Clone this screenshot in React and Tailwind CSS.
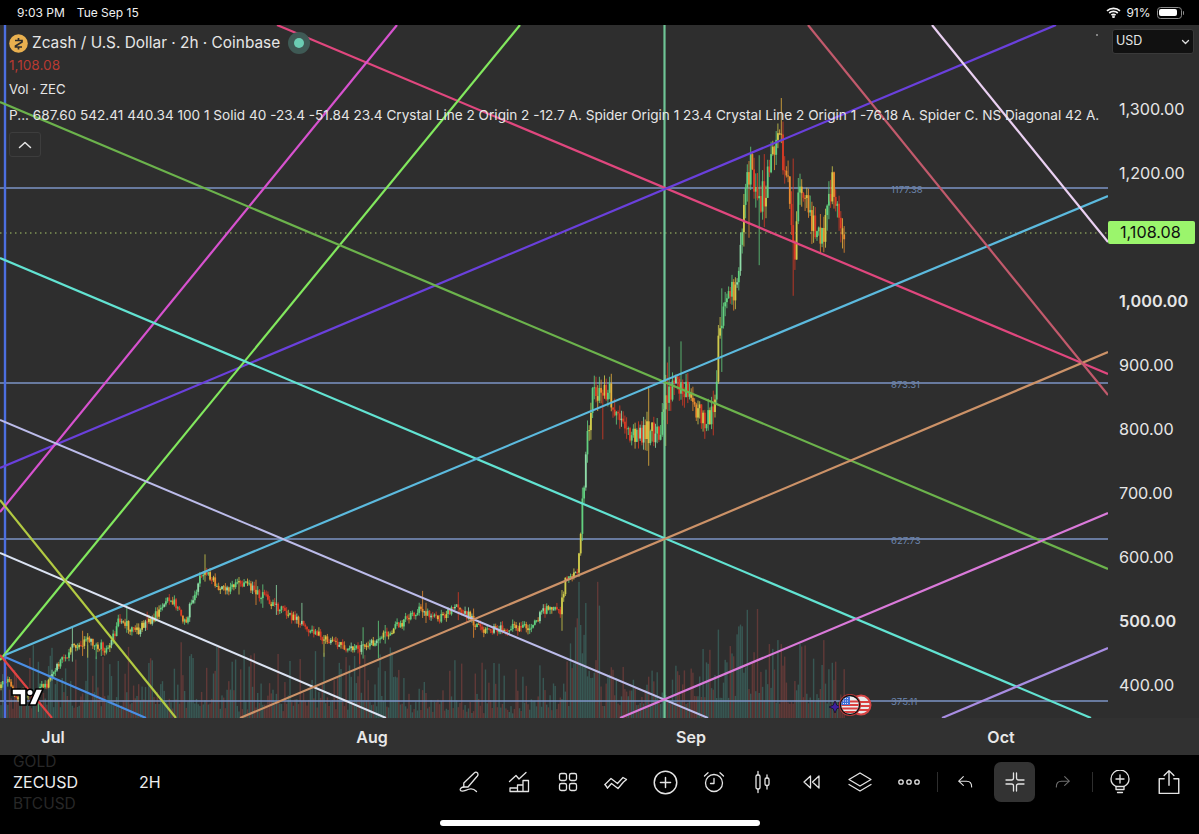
import React from "react";

const FONT = "font-['Inter','Liberation_Sans',sans-serif]";

function makeRng(seed) {
  let s = seed;
  return () => {
    s = (s * 1664525 + 1013904223) % 4294967296;
    return s / 4294967296;
  };
}

const anchors = [[0,688],[8,676],[16,698],[30,692],[48,684],[60,662],[72,648],[90,640],[108,650],[120,618],[135,632],[150,622],[170,596],[185,622],[203,570],[222,590],[245,582],[262,596],[285,612],[310,630],[335,645],[365,648],[395,628],[420,610],[440,618],[458,606],[485,632],[510,628],[530,626],[548,608],[560,612],[566,578],[577,572],[582,515],[586,440],[592,400],[604,385],[615,405],[628,440],[645,432],[660,432],[668,395],[678,385],[692,400],[707,425],[715,405],[718,345],[726,300],[738,285],[744,205],[750,165],[757,200],[765,195],[778,130],[785,170],[790,205],[795,255],[800,175],[808,200],[818,245],[824,230],[832,180],[838,210],[845,238]];

function priceAt(x) {
  for (let i = 1; i < anchors.length; i++) {
    if (x <= anchors[i][0]) {
      const [x0, y0] = anchors[i - 1];
      const [x1, y1] = anchors[i];
      return y0 + ((y1 - y0) * (x - x0)) / (x1 - x0);
    }
  }
  return 238;
}

const rng = makeRng(77);
const candles = [];
const vols = [];
let prev = 688;
for (let x = 1; x <= 845; x += 1.7) {
  const amp = x > 740 ? 32 : x > 582 ? 24 : 9;
  const p = priceAt(x);
  const c = p + (rng() - 0.5) * amp;
  const o = prev;
  prev = c;
  const wick = rng() < 0.06 ? 2.2 : 0.5;
  const hi = Math.min(o, c) - rng() * amp * wick;
  const lo = Math.max(o, c) + rng() * amp * wick;
  const up = c < o;
  const r = rng();
  const color = up
    ? r < 0.6 ? "#62d07f" : r < 0.85 ? "#cfcb4c" : "#8fdca8"
    : r < 0.6 ? "#dc3a24" : r < 0.85 ? "#ea8a2e" : "#e8b23e";
  candles.push({ x, o, c, hi, lo, color });
  const q = rng();
  let env = 6 + Math.pow(q, 3) * 62 + rng() * 12;
  if (x > 570 && x < 600) env = 40 + Math.pow(q, 2) * 135;
  else if (x >= 600 && x < 660) env = 12 + Math.pow(q, 2) * 50;
  else if (x >= 660 && x < 700) env = 14 + Math.pow(q, 2) * 40;
  else if (x >= 700 && x < 760) env = 20 + Math.pow(q, 2) * 90;
  else if (x >= 760) env = 14 + Math.pow(q, 2) * 70;
  if (x > 400 && x < 560) env *= 0.75;
  vols.push({ x, h: env, color: up ? "#3f7a72" : "#8a4340" });
}

const lines = [
  ["#4c6fe0", 5, 25, 5, 718, 2.4],
  ["#e0477e", 277, 25, 1108, 374, 2.2],
  ["#6a40dc", 0, 468, 1056, 25, 2.2],
  ["#d752cf", 397, 25, 0, 512, 2.2],
  ["#82e85e", 520, 25, 0, 660, 2.2],
  ["#6cb34c", 0, 102, 1108, 569, 2.2],
  ["#62e3d2", 0, 258, 1091, 718, 2.2],
  ["#5cbade", 5, 655, 1108, 196, 2.2],
  ["#bcbcea", 0, 420, 708, 718, 2],
  ["#dbe3f2", 0, 553, 386, 718, 2],
  ["#4a8ee4", 5, 657, 146, 718, 2.2],
  ["#e24343", 0, 655, 52, 718, 2.2],
  ["#b2ca42", 0, 500, 176, 718, 2.2],
  ["#cc9268", 240, 718, 1108, 352, 2.2],
  ["#da7ada", 620, 718, 1108, 513, 2.2],
  ["#a88de2", 942, 718, 1108, 648, 2.2],
  ["#c25a6c", 808, 25, 1108, 395, 2.2],
  ["#ead0f2", 932, 25, 1108, 242, 2.2],
];

function Chart() {
  return (
    <svg viewBox="0 25 1108 693" className="block h-full w-full" preserveAspectRatio="none">
      {vols.map((v, i) => (
        <rect key={i} x={v.x - 0.7} y={718 - v.h} width="1.4" height={v.h} fill={v.color} opacity="0.55" />
      ))}
      {[188, 383, 539, 701].map((y) => (
        <line key={y} x1="0" x2="1108" y1={y} y2={y} stroke="#7c94c6" strokeWidth="1.4" />
      ))}
      <line x1="0" x2="1108" y1="233" y2="233" stroke="#a8c76a" strokeWidth="1" strokeDasharray="1.5 3.5" />
      {candles.map((c, i) => (
        <g key={i}>
          <line x1={c.x} x2={c.x} y1={c.hi} y2={c.lo} stroke={c.color} strokeWidth="0.8" />
          <rect x={c.x - 0.9} y={Math.min(c.o, c.c)} width="1.8" height={Math.max(Math.abs(c.o - c.c), 1)} fill={c.color} />
        </g>
      ))}
      <line x1="664.5" x2="664.5" y1="25" y2="718" stroke="#6fc495" strokeWidth="2.2" />
      {lines.map(([color, x1, y1, x2, y2, w], i) => (
        <line key={i} x1={x1} y1={y1} x2={x2} y2={y2} stroke={color} strokeWidth={w} />
      ))}
    </svg>
  );
}

function TvLogo() {
  return (
    <svg width="34" height="20" viewBox="0 0 34 20" className="absolute bottom-[11px] left-[10px]">
      <path d="M2 2h14v16h-6V8H2z" fill="#fff" stroke="#000" strokeWidth="1.6" />
      <circle cx="20" cy="5.5" r="3.2" fill="#fff" stroke="#000" strokeWidth="1.4" />
      <path d="M26 2h7l-7 16h-7z" fill="#fff" stroke="#000" strokeWidth="1.6" />
    </svg>
  );
}

function Badges() {
  return (
    <svg width="46" height="26" viewBox="0 0 46 26" className="absolute bottom-0 left-[829px]">
      <path d="M6 9l1.800 4.200L12 15l-4.200 1.800L6 21l-1.800-4.200L0 15l4.200-1.800z" fill="#3e1f9c" stroke="#14102a" strokeWidth="0.8" />
      <circle cx="32" cy="13" r="9.500" fill="#e9e9ea" stroke="#d64545" strokeWidth="2" />
      <path d="M23 10h18M23 14h18M24 18h16" stroke="#d94040" strokeWidth="2" />
      <circle cx="21" cy="13" r="11" fill="#c23a3a" />
      <circle cx="21" cy="13" r="9.500" fill="#eeeeee" stroke="#111" strokeWidth="1.400" />
      <clipPath id="flg"><circle cx="21" cy="13" r="8.800" /></clipPath>
      <g clipPath="url(#flg)">
        <path d="M12 9.500h18M12 13h18M12 16.500h18M12 20h18" stroke="#d94040" strokeWidth="1.800" />
        <rect x="12" y="4" width="9" height="9" fill="#3f6fd8" />
        <path d="M14 6.500h6M14 9h6M14 11.500h6" stroke="#dfe7fb" strokeWidth="1" strokeDasharray="1 1" />
      </g>
    </svg>
  );
}

const sw = { fill: "none", stroke: "#e4e4e4", strokeWidth: 1.3, strokeLinecap: "round", strokeLinejoin: "round" };
const Ic = ({ children, size = 24 }) => (
  <svg width={size} height={size} viewBox="0 0 24 24" {...sw}>{children}</svg>
);

const icons = {
  pen: <Ic><path d="M16.500 2.800c1.300-1.300 3.500-.3 3.500 1.600 0 .6-.2 1.100-.6 1.600L10 17H5.800v-4z" /><path d="M5.800 17c-2.200.2-3.800 1.500-3.600 2.900.3 1.600 3 1.400 5.500.4 3.200-1.300 7-2.800 10.800 1.200" /></Ic>,
  chart: <Ic><path d="M2.500 11.500 9 5.500l3 3.500 7-6.500" /><path d="M3 21.500h18.500v-11H16v11M16 15h-5.500v6.500M10.500 18H3v3.500" /></Ic>,
  grid: <Ic><rect x="3.500" y="3.500" width="7" height="7" rx="1.800" /><rect x="13.500" y="3.500" width="7" height="7" rx="1.800" /><rect x="3.500" y="13.500" width="7" height="7" rx="1.800" /><rect x="13.500" y="13.500" width="7" height="7" rx="1.800" /></Ic>,
  trend: <Ic><path d="M1 14.500 7 8.500l6.500 5 5.500-6 3.500 2" /><path d="M3.500 18 7.500 13.500 14 18.500 19.500 12l3-2.500" /><path d="M1 14.500 3.500 18" /></Ic>,
  plus: <Ic size={27}><circle cx="12" cy="12" r="10" /><path d="M12 7.500v9M7.500 12h9" /></Ic>,
  alarm: <Ic><circle cx="12" cy="13" r="8.500" /><path d="M12 8.500V13.500H8.500" /><path d="M2.500 6 6 2.800M21.500 6 18 2.800" /></Ic>,
  candle: <Ic><path d="M8 1.500V5M8 19v3.500M17 5v3M17 15.500V19" /><rect x="6" y="5" width="4" height="14" rx="1.400" /><rect x="15" y="8" width="4" height="7.500" rx="1.400" /></Ic>,
  rewind: <Ic><path d="M11.500 6 5 12l6.500 6zM20 6l-6.500 6 6.500 6z" /></Ic>,
  layers: <Ic size={24}><path d="M12 3 23 9.500 12 16 1 9.500z" /><path d="M1 14.500 12 21l11-6.500" /></Ic>,
  dots: <Ic><circle cx="4" cy="12" r="2.200" /><circle cx="12" cy="12" r="2.200" /><circle cx="20" cy="12" r="2.200" /></Ic>,
  undo: <Ic size={20}><path d="M20 18c0-5-2.500-7-6-7H5" /><path d="M10 5.500 4.500 11l5.500 5" /></Ic>,
  shrink: <Ic><path d="M10.500 3v5c0 1.200-.6 2-2 2H3M13.500 3v5c0 1.200.6 2 2 2H21M10.500 21v-5c0-1.200-.6-2-2-2H3M13.500 21v-5c0-1.200.6-2 2-2H21" /></Ic>,
  redo: <svg width="20" height="20" viewBox="0 0 24 24" {...sw} stroke="#6f6f6f"><path d="M4 18c0-5 2.500-7 6-7h9" /><path d="M14 5.500 19.500 11 14 16" /></svg>,
  bulb: <Ic size={24}><path d="M8 16.500c-3-1.500-5-4.200-5-7.500a9 9 0 0 1 18 0c0 3.300-2 6-5 7.500z" /><path d="M12 5v8M8 9h8" /><path d="M8 16.500v3h8v-3M9.500 22.500h5" /></Ic>,
  share: <Ic size={26}><path d="M7.500 9H3v13.500h18V9h-4.500" /><path d="M12 15V1.500M7.500 6 12 1.500 16.500 6" /></Ic>,
};

function Slot({ children }) {
  return <div className="flex w-[48.7px] items-center justify-center">{children}</div>;
}
const Sep = () => <div className="h-[20px] w-px bg-[#2e2e2e]" />;

function Toolbar() {
  return (
    <div className="flex h-[79px] shrink-0 bg-black">
      <div className="relative w-[446px] shrink-0">
        <div className="absolute left-[13px] top-[1px] text-[15.500px] leading-[12px] text-[#282828]">GOLD</div>
        <div className="absolute left-[13px] top-[18px] text-[16px] leading-[18px] text-[#ededed]">ZECUSD</div>
        <div className="absolute left-[139px] top-[18px] text-[16px] leading-[18px] text-[#ededed]">2H</div>
        <div className="absolute left-[13px] top-[40px] text-[15.500px] leading-[18px] text-[#282828]">BTCUSD</div>
      </div>
      <div className="box-content flex h-[40px] items-center self-start pt-[7px]">
        <Slot>{icons.pen}</Slot>
        <Slot>{icons.chart}</Slot>
        <Slot>{icons.grid}</Slot>
        <Slot>{icons.trend}</Slot>
        <Slot>{icons.plus}</Slot>
        <Slot>{icons.alarm}</Slot>
        <Slot>{icons.candle}</Slot>
        <Slot>{icons.rewind}</Slot>
        <Slot>{icons.layers}</Slot>
        <Slot>{icons.dots}</Slot>
        <div className="mx-[4.500px]"><Sep /></div>
        <div className="flex w-[45px] justify-center">{icons.undo}</div>
        <div className="ml-[6.500px] mr-[4px] flex h-[40px] w-[41px] items-center justify-center rounded-[7px] bg-[#333333]">{icons.shrink}</div>
        <div className="flex w-[48px] justify-center">{icons.redo}</div>
        <div className="ml-[4.500px] mr-[3px]"><Sep /></div>
        <Slot>{icons.bulb}</Slot>
        <Slot>{icons.share}</Slot>
      </div>
    </div>
  );
}

function Legend() {
  return (
    <div className="absolute left-[9px] top-[6px] text-[#e6e6e6]">
      <div className="flex h-[24px] items-center">
        <svg width="19" height="19" viewBox="0 0 19 19" className="mr-[4px]">
          <circle cx="9.500" cy="9.500" r="9.300" fill="#e9b04f" />
          <path d="M6 6.500h7v1.500L6.500 12v1H13M9.500 4v2.500M9.500 13v2.500" fill="none" stroke="#2e2e2e" strokeWidth="1.700" />
        </svg>
        <span className="whitespace-nowrap text-[15.400px] leading-[24px]">Zcash / U.S. Dollar · 2h · Coinbase</span>
        <span className="ml-[8px] flex h-[22px] w-[22px] items-center justify-center rounded-full bg-[#3f5a55]">
          <span className="h-[10px] w-[10px] rounded-full bg-[#6bcdb3]" />
        </span>
      </div>
      <div className="text-[13.600px] leading-[20px] text-[#b83a32]">1,108.08</div>
      <div className="mt-[4px] text-[13.200px] leading-[20px]">Vol · ZEC</div>
      <div className="mt-[6px] w-[1092px] whitespace-nowrap text-[13.600px] leading-[20px]">
        P... 687.60 542.41 440.34 100 1 Solid 40 -23.4 -51.84 23.4 Crystal Line 2 Origin 2 -12.7 A. Spider Origin 1 23.4 Crystal Line 2 Origin 1 -76.18 A. Spider C. NS Diagonal 42 A.
      </div>
      <div className="mt-[7px] flex h-[25px] w-[32px] items-center justify-center rounded-[3px] border border-[#3d3d3d]">
        <svg width="16" height="10" viewBox="0 0 16 10" fill="none" stroke="#e6e6e6" strokeWidth="1.500" strokeLinecap="round" strokeLinejoin="round"><path d="M2.500 7.500 8 2.500l5.500 5" /></svg>
      </div>
    </div>
  );
}

const prices = ["1,300.00", "1,200.00", "", "1,000.00", "900.00", "800.00", "700.00", "600.00", "500.00", "400.00"];

function PriceAxis() {
  return (
    <div className="relative w-[91px] shrink-0 text-[#e6e6e6]">
      <div className="ml-[4px] mt-[4px] flex h-[25px] w-[82px] items-center justify-between rounded-[3px] border border-[#3a3a3a] bg-[#111111] pl-[3px] pr-[3px]">
        <span className="text-[12.500px]">USD</span>
        <svg width="9" height="6" viewBox="0 0 9 6" fill="none" stroke="#dddddd" strokeWidth="1.300" strokeLinecap="round" strokeLinejoin="round"><path d="M1.500 1.500 4.500 4.500l3-3" /></svg>
      </div>
      <div className="mt-[23px]">
        {prices.map((p, i) => (
          <div key={i} className={`flex h-16 items-center pl-[11px] text-[16.200px] ${p === "1,000.00" || p === "500.00" ? "font-semibold" : "font-normal"}`}>{p}</div>
        ))}
      </div>
      <div className="absolute left-0 top-[196px] flex h-[23px] w-[87px] items-center rounded-[2px] bg-[#9bf56c] pl-[12px] text-[16.200px] text-[#101010]">1,108.08</div>
    </div>
  );
}

function ChartArea() {
  return (
    <div className="flex h-[693px] shrink-0 bg-[#2e2e2e]">
      <div className="relative h-full w-[1108px] shrink-0 overflow-hidden">
        <Chart />
        <span className="absolute left-[891px] top-[159px] text-[9.500px] leading-[12px] text-[#6d86ae]">1177.38</span>
        <span className="absolute left-[891px] top-[354px] text-[9.500px] leading-[12px] text-[#6d86ae]">873.31</span>
        <span className="absolute left-[891px] top-[510px] text-[9.500px] leading-[12px] text-[#6d86ae]">627.73</span>
        <span className="absolute left-[891px] top-[671px] text-[9.500px] leading-[12px] text-[#6d86ae]">375.11</span>
        <span className="absolute right-[10px] top-[9px] h-[2px] w-[2px] rounded-full bg-[#a0a0a0]" />
        <Legend />
        <TvLogo />
        <Badges />
      </div>
      <PriceAxis />
    </div>
  );
}

function StatusBar() {
  return (
    <div className="flex h-[25px] shrink-0 items-center justify-between bg-black pl-[17px] pr-[15px] text-[12px] text-[#f0f0f0]">
      <div className="flex gap-[12px]">
        <span>9:03 PM</span>
        <span>Tue Sep 15</span>
      </div>
      <div className="flex items-center gap-[5px]">
        <svg width="15" height="11" viewBox="0 0 15 11" fill="none" stroke="#f4f4f4" strokeWidth="1.700">
          <path d="M1 3.800c3.600-3.300 9.400-3.300 13 0M3.200 6c2.400-2.100 6.200-2.100 8.600 0M5.400 8.200c1.200-1 3-1 4.200 0" />
          <circle cx="7.500" cy="9.800" r="0.500" fill="#f4f4f4" />
        </svg>
        <span>91%</span>
        <div className="ml-[1px] flex items-center">
          <div className="flex h-[12px] w-[25px] items-center rounded-[3.500px] border border-[#8a8a8a] p-[1.500px]">
            <div className="h-full w-[88%] rounded-[2px] bg-white" />
          </div>
          <div className="ml-[1px] h-[4px] w-[1.500px] rounded-r-full bg-[#8a8a8a]" />
        </div>
      </div>
    </div>
  );
}

function TimeAxis() {
  return (
    <div className="flex h-[37px] shrink-0 items-center gap-[259px] bg-[#313131] pl-[23px] text-[16px] font-semibold text-[#e8e8e8]">
      <span className="w-[60px] text-center">Jul</span>
      <span className="w-[60px] text-center">Aug</span>
      <span className="w-[60px] text-center">Sep</span>
      <span className="ml-[-9px] w-[60px] text-center">Oct</span>
    </div>
  );
}

export default function App() {
  return (
    <div className={`relative flex h-[834px] w-[1199px] flex-col overflow-hidden bg-black ${FONT}`}>
      <StatusBar />
      <ChartArea />
      <TimeAxis />
      <Toolbar />
      <div className="absolute bottom-[8px] left-[440px] h-[6px] w-[320px] rounded-full bg-white" />
    </div>
  );
}
